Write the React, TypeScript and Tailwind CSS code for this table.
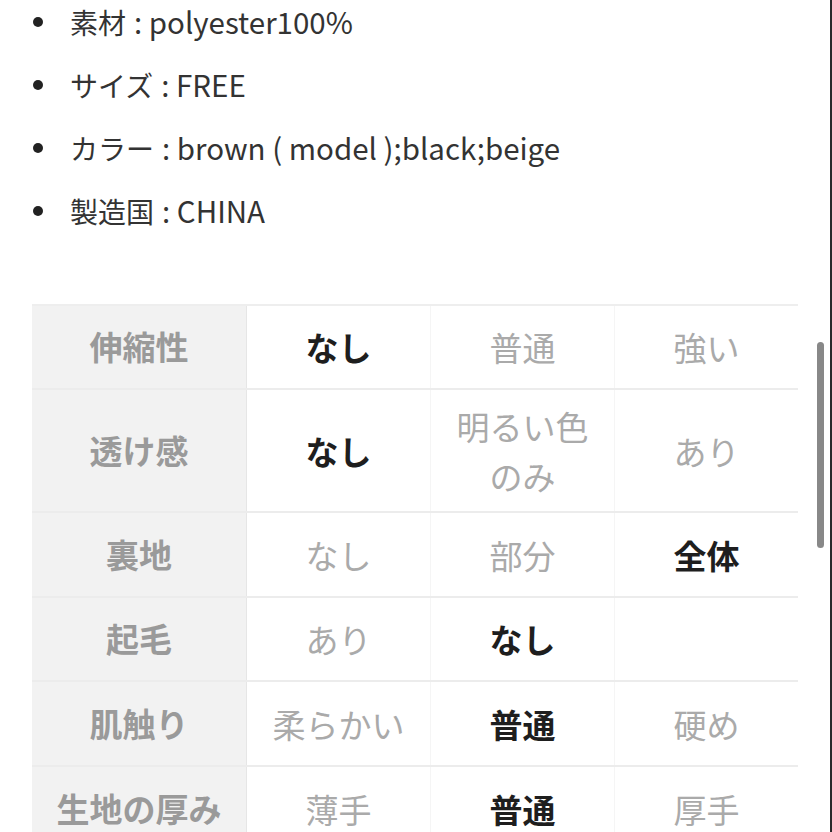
const specs = [
  { label: '素材', value: 'polyester100%' },
  { label: 'サイズ', value: 'FREE' },
  { label: 'カラー', value: 'brown ( model );black;beige' },
  { label: '製造国', value: 'CHINA' },
];

type Cell = { text: string[]; on?: boolean };

const rows: { label: string; h: string; cells: Cell[] }[] = [
  { label: '伸縮性', h: 'h-[84px]', cells: [{ text: ['なし'], on: true }, { text: ['普通'] }, { text: ['強い'] }] },
  { label: '透け感', h: 'h-[123px]', cells: [{ text: ['なし'], on: true }, { text: ['明るい色', 'のみ'] }, { text: ['あり'] }] },
  { label: '裏地', h: 'h-[85px]', cells: [{ text: ['なし'] }, { text: ['部分'] }, { text: ['全体'], on: true }] },
  { label: '起毛', h: 'h-[84px]', cells: [{ text: ['あり'] }, { text: ['なし'], on: true }, { text: [] }] },
  { label: '肌触り', h: 'h-[85px]', cells: [{ text: ['柔らかい'] }, { text: ['普通'], on: true }, { text: ['硬め'] }] },
  { label: '生地の厚み', h: 'h-[85px]', cells: [{ text: ['薄手'] }, { text: ['普通'], on: true }, { text: ['厚手'] }] },
];

export default function App() {
  return (
    <div
      className="relative w-[832px] h-[832px] overflow-hidden bg-white border-r-2 border-[#2a2a2a]"
      style={{ fontFamily: '"Noto Sans CJK JP", "Noto Sans", sans-serif' }}
    >
      <ul className="mt-[-10px] pl-[33px]">
        {specs.map((s) => (
          <li key={s.label} className="flex items-center h-[63px] text-[#333]">
            <span className="w-[10px] h-[10px] rounded-full bg-[#222] mr-[27px]" />
            <span className="text-[28px]">{s.label}</span>
            <span className="text-[29.5px] ml-[8px]">: {s.value}</span>
          </li>
        ))}
      </ul>

      <div className="mt-[62px] ml-[32px] w-[766px] border-t-2 border-[#eeeeee]">
        {rows.map((r) => (
          <div key={r.label} className={`flex ${r.h} border-b-2 border-[#ececec]`}>
            <div className="w-[215px] shrink-0 bg-[#f2f2f2] flex items-center justify-center text-[33px] font-bold text-[#9a9a9a] border-r border-[#e6e6e6]">
              {r.label}
            </div>
            {r.cells.map((c, i) => (
              <div
                key={i}
                className={`flex-1 flex flex-col items-center justify-center text-[33px] leading-[50px] ${
                  i < 2 ? 'border-r border-[#f5f5f5]' : ''
                } ${c.on ? 'font-bold text-[#1e1e1e]' : 'text-[#aaaaaa]'}`}
              >
                {c.text.map((t) => (
                  <span key={t}>{t}</span>
                ))}
              </div>
            ))}
          </div>
        ))}
      </div>

      <div className="absolute left-[817px] top-[342px] w-[7px] h-[206px] rounded-full bg-[#888888]" />
    </div>
  );
}
